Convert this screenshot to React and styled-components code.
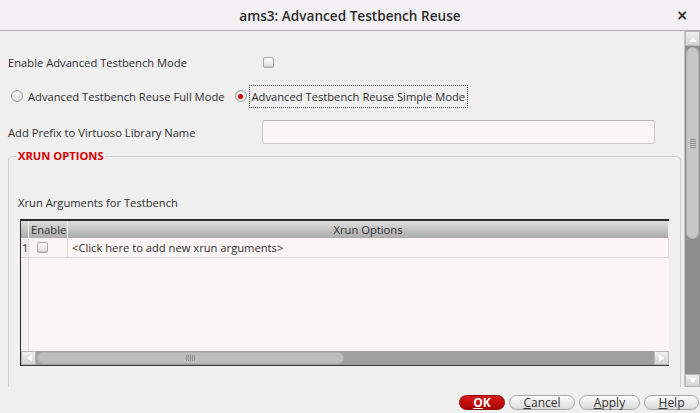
import React from 'react';
import styled, { createGlobalStyle } from 'styled-components';

const Global = createGlobalStyle`
  html, body { margin: 0; padding: 0; }
  body { font-family: "Open Sans", "Noto Sans", sans-serif; background: #efefef; }
  * { box-sizing: border-box; }
`;

const Window = styled.div`
  width: 700px;
  height: 413px;
  display: flex;
  flex-direction: column;
  background: #efefef;
  color: #2e2e2e;
  font-size: 11.2px;
  overflow: hidden;
`;

const TitleBar = styled.div`
  flex: none;
  height: 31px;
  display: grid;
  grid-template-columns: 1fr auto 1fr;
  align-items: center;
  background: #f3f0f3;
  border-bottom: 1px solid #aeaaae;
`;

const Title = styled.div`
  grid-column: 2;
  font-size: 13.6px;
  font-weight: 600;
  color: #2c2c2c;
`;

const CloseX = styled.div`
  grid-column: 3;
  justify-self: end;
  padding-right: 12px;
  font-size: 14px;
  font-weight: 700;
  color: #2c2c2c;
  font-family: "DejaVu Sans", sans-serif;
`;

const Body = styled.div`
  flex: none;
  height: 356px;
  display: flex;
`;

const Content = styled.div`
  flex: 1;
  display: flex;
  flex-direction: column;
  padding: 0 3px 0 8px;
  overflow: hidden;
`;

const FormRow = styled.div`
  flex: none;
  display: flex;
  align-items: center;
  height: ${p => p.$h || 22}px;
  margin-top: ${p => p.$mt || 0}px;
`;

const Label = styled.span`
  width: ${p => p.$w ? `${p.$w}px` : 'auto'};
  flex: none;
  white-space: nowrap;
`;

const Check = styled.span`
  display: inline-block;
  width: 11px;
  height: 11px;
  flex: none;
  border: 1px solid #a9a9a9;
  border-radius: 2px;
  background: linear-gradient(#ffffff, #dcdcdc);
  box-shadow: inset 0 -1px 0 #c8c8c8;
  margin-left: ${p => p.$ml || 0}px;
`;

const Radio = styled.span`
  width: 12px;
  height: 12px;
  flex: none;
  border-radius: 50%;
  border: 1px solid #9e9e9e;
  background: radial-gradient(circle at 50% 35%, #ffffff, #d2d2d2);
  display: inline-flex;
  align-items: center;
  justify-content: center;
  margin-left: ${p => p.$ml || 0}px;
  margin-right: ${p => p.$mr || 0}px;
  &::after {
    content: '';
    width: 5px;
    height: 5px;
    border-radius: 50%;
    background: ${p => (p.$on ? '#d00000' : 'transparent')};
  }
`;

const FocusLabel = styled.span`
  border: 1px dotted #444;
  padding: 3px 2px;
  white-space: nowrap;
`;

const TextInput = styled.div`
  width: 393px;
  height: 24px;
  border: 1px solid #cfcaca;
  border-top-color: #b8b4b4;
  border-radius: 3px;
  background: #fcf5f5;
`;

const Group = styled.fieldset`
  flex: none;
  margin: 5px 0 0 0;
  padding: 32px 11px 0 9px;
  border: 1px solid #cdcdcd;
  border-radius: 4px;
  min-height: 260px;
`;

const Legend = styled.legend`
  padding: 0 1px;
  margin-left: -1px;
  color: #d40000;
  font-weight: 700;
  font-size: 11.2px;
  line-height: 14px;
`;

const SubLabel = styled.div`
  line-height: 16px;
  height: 16px;
`;

const Table = styled.div`
  margin: 8px 0 0 2px;
  height: 147px;
  display: flex;
  flex-direction: column;
  border-top: 2px solid #2a2a2a;
  border-left: 1px solid #2a2a2a;
  border-bottom: 1px solid #3a3a3a;
  background: #fcf5f5;
`;

const Cols = styled.div`
  display: grid;
  grid-template-columns: 8px 39px 1fr;
  height: ${p => p.$h}px;
  flex: none;
`;

const HeadCell = styled.div`
  display: flex;
  align-items: center;
  justify-content: ${p => (p.$center ? 'center' : 'flex-start')};
  padding-left: ${p => p.$pl || 0}px;
  background: linear-gradient(#dedede, #aaaaaa);
  border-right: 1px solid #ececec;
  color: #303030;
  line-height: 15px;
`;

const Cell = styled.div`
  display: flex;
  align-items: center;
  padding-left: ${p => p.$pl || 0}px;
  background: ${p => (p.$num ? '#f1eeee' : '#fcf5f5')};
  border-right: 1px solid #dcd6d6;
  border-bottom: 1px solid #dcd6d6;
  white-space: nowrap;
`;

const Filler = styled.div`
  flex: 1;
  display: grid;
  grid-template-columns: 8px 1fr;
`;

const NumStrip = styled.div`
  background: #f3f0f0;
  border-right: 1px solid #e2dcdc;
`;

const HScroll = styled.div`
  height: 14px;
  flex: none;
  display: flex;
  background: #9f9f9f;
`;

const ArrowBtn = styled.div`
  width: ${p => p.$w || 15}px;
  height: ${p => p.$h || 14}px;
  flex: none;
  display: flex;
  align-items: center;
  justify-content: center;
  background: linear-gradient(#eeeeee, #d4d4d4);
  border: 1px solid #b6b6b6;
`;

const Tri = styled.span`
  width: 0;
  height: 0;
  border-style: solid;
  ${p => p.$dir === 'left' && 'border-width: 4px 6px 4px 0; border-color: transparent #ffffff transparent transparent;'}
  ${p => p.$dir === 'right' && 'border-width: 4px 0 4px 6px; border-color: transparent transparent transparent #ffffff;'}
  ${p => p.$dir === 'up' && 'border-width: 0 4px 6px 4px; border-color: transparent transparent #ffffff transparent;'}
  ${p => p.$dir === 'down' && 'border-width: 6px 4px 0 4px; border-color: #ffffff transparent transparent transparent;'}
  filter: drop-shadow(0 0 0.6px #8a8a8a);
`;

const HTrack = styled.div`
  flex: 1;
  display: flex;
  align-items: stretch;
  padding: 1px 0 1px 1px;
`;

const HThumb = styled.div`
  width: 307px;
  border-radius: 7px;
  background: #bdbdbd;
  border: 1px solid #b0b0b0;
  display: flex;
  align-items: center;
  justify-content: center;
`;

const Grip = styled.span`
  ${p => p.$v
    ? 'width: 6px; height: 9px; background: repeating-linear-gradient(#8f8f8f 0 1px, transparent 1px 2px);'
    : 'width: 9px; height: 6px; background: repeating-linear-gradient(90deg, #8f8f8f 0 1px, transparent 1px 2px);'}
`;

const VScroll = styled.div`
  width: 16px;
  flex: none;
  display: flex;
  flex-direction: column;
  border-left: 1px solid #c4c4c4;
  background: #8e8e8e;
`;

const VTrack = styled.div`
  flex: 1;
  display: flex;
  flex-direction: column;
  padding: 1px 1px 0 1px;
`;

const VThumb = styled.div`
  height: 192px;
  border-radius: 7px;
  background: #c6c6c6;
  border: 1px solid #b4b4b4;
  display: flex;
  align-items: center;
  justify-content: center;
`;

const Footer = styled.div`
  flex: 1;
  display: flex;
  justify-content: flex-end;
  align-items: center;
  gap: 4px;
  padding: 4px 1px 0 0;
`;

const Button = styled.div`
  width: ${p => p.$w}px;
  height: 15px;
  border-radius: 8px;
  display: flex;
  align-items: center;
  justify-content: center;
  font-size: 12px;
  line-height: 13px;
  ${p => p.$primary
    ? 'background: linear-gradient(#dc1a1a, #a80000); border: 1px solid #8c0000; color: #fff; font-weight: 700;'
    : 'background: linear-gradient(#fdfdfd, #d9d9d9); border: 1px solid #a4a4a4; color: #333;'}
  u { text-decoration: underline; text-underline-offset: 1px; }
`;

export default function App() {
  return (
    <>
      <Global />
      <Window>
        <TitleBar>
          <Title>ams3: Advanced Testbench Reuse</Title>
          <CloseX>×</CloseX>
        </TitleBar>
        <Body>
          <Content>
            <FormRow $mt={20}>
              <Label $w={255}>Enable Advanced Testbench Mode</Label>
              <Check />
            </FormRow>
            <FormRow $mt={12}>
              <Radio $ml={3} $mr={5} />
              <Label>Advanced Testbench Reuse Full Mode</Label>
              <Radio $on $ml={10} $mr={2} />
              <FocusLabel>Advanced Testbench Reuse Simple Mode</FocusLabel>
            </FormRow>
            <FormRow $mt={13} $h={24}>
              <Label $w={254}>Add Prefix to Virtuoso Library Name</Label>
              <TextInput />
            </FormRow>
            <Group>
              <Legend>XRUN OPTIONS</Legend>
              <SubLabel>Xrun Arguments for Testbench</SubLabel>
              <Table>
                <Cols $h={17}>
                  <HeadCell />
                  <HeadCell $pl={2}>Enable</HeadCell>
                  <HeadCell $center>Xrun Options</HeadCell>
                </Cols>
                <Cols $h={20}>
                  <Cell $num $pl={1}>1</Cell>
                  <Cell $pl={8}><Check /></Cell>
                  <Cell $pl={4}>&lt;Click here to add new xrun arguments&gt;</Cell>
                </Cols>
                <Filler>
                  <NumStrip />
                  <div />
                </Filler>
                <HScroll>
                  <ArrowBtn><Tri $dir="left" /></ArrowBtn>
                  <HTrack>
                    <HThumb><Grip /></HThumb>
                  </HTrack>
                  <ArrowBtn><Tri $dir="right" /></ArrowBtn>
                </HScroll>
              </Table>
            </Group>
          </Content>
          <VScroll>
            <ArrowBtn $w={15} $h={15}><Tri $dir="up" /></ArrowBtn>
            <VTrack>
              <VThumb><Grip $v /></VThumb>
            </VTrack>
            <ArrowBtn $w={15} $h={13}><Tri $dir="down" /></ArrowBtn>
          </VScroll>
        </Body>
        <Footer>
          <Button $primary $w={46}><span><u>O</u>K</span></Button>
          <Button $w={66}><span><u>C</u>ancel</span></Button>
          <Button $w={61}><span><u>A</u>pply</span></Button>
          <Button $w={55}><span><u>H</u>elp</span></Button>
        </Footer>
      </Window>
    </>
  );
}
